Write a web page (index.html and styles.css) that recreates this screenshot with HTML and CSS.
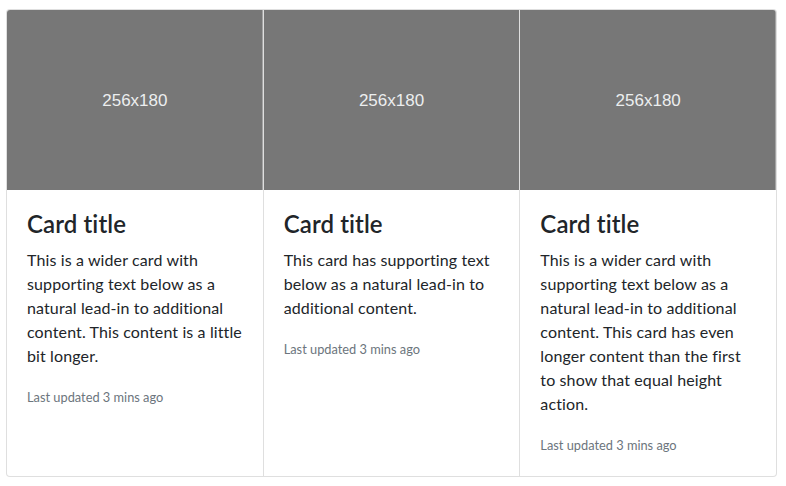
FILE: index.html
```html
<!DOCTYPE html>
<html lang="en">
<head>
<meta charset="utf-8">
<title>Card group</title>
<link rel="stylesheet" href="styles.css">
</head>
<body>
<div class="card-group">
  <div class="card">
    <svg class="card-img" viewBox="0 0 256 180" preserveAspectRatio="none" aria-label="256x180"><rect width="256" height="180" fill="#777"/></svg>
    <span class="img-label">256x180</span>
    <div class="card-body">
      <h5 class="card-title">Card title</h5>
      <p class="card-text">This is a wider card with supporting text below as a natural lead-in to additional content. This content is a little bit longer.</p>
      <p class="card-text"><small class="muted">Last updated 3 mins ago</small></p>
    </div>
  </div>
  <div class="card">
    <svg class="card-img" viewBox="0 0 256 180" preserveAspectRatio="none" aria-label="256x180"><rect width="256" height="180" fill="#777"/></svg>
    <span class="img-label">256x180</span>
    <div class="card-body">
      <h5 class="card-title">Card title</h5>
      <p class="card-text">This card has supporting text below as a natural lead-in to additional content.</p>
      <p class="card-text"><small class="muted">Last updated 3 mins ago</small></p>
    </div>
  </div>
  <div class="card">
    <svg class="card-img" viewBox="0 0 256 180" preserveAspectRatio="none" aria-label="256x180"><rect width="256" height="180" fill="#777"/></svg>
    <span class="img-label">256x180</span>
    <div class="card-body">
      <h5 class="card-title">Card title</h5>
      <p class="card-text">This is a wider card with supporting text below as a natural lead-in to additional content. This card has even longer content than the first to show that equal height action.</p>
      <p class="card-text"><small class="muted">Last updated 3 mins ago</small></p>
    </div>
  </div>
</div>
</body>
</html>
```
FILE: styles.css
```css
* { box-sizing: border-box; }
html, body { margin: 0; padding: 0; background: #fff; }
body {
  font-family: Lato, "Noto Sans", sans-serif;
  font-size: 16px;
  line-height: 1.5;
  color: #212529;
  padding: 9px 9px 0 6px;
}
.card-group {
  display: flex;
  width: 771px;
}
.card {
  position: relative;
  flex: 1 0 0%;
  display: flex;
  flex-direction: column;
  background: #fff;
  border: 1px solid rgba(0, 0, 0, 0.125);
}
.card + .card { border-left: 0; }
.card:first-child { border-radius: 4px 0 0 4px; }
.card:last-child { border-radius: 0 4px 4px 0; }
.card-img {
  display: block;
  width: 100%;
  height: 180px;
}
.card:first-child .card-img { border-top-left-radius: 3px; }
.card:last-child .card-img { border-top-right-radius: 3px; }
.img-label {
  position: absolute;
  left: 0;
  right: 0;
  top: 81px;
  text-align: center;
  font-family: "Liberation Sans", Arial, sans-serif;
  font-size: 17px;
  line-height: 20px;
  color: #eceeef;
}
.card-body {
  flex: 1 1 auto;
  padding: 20px;
}
.card-title {
  margin: 0 0 9px;
  font-size: 24px;
  font-weight: 600;
  line-height: 1.2;
  letter-spacing: 0.1px;
}
.card-text {
  margin: 0 0 16px;
  letter-spacing: 0.12px;
}
.card-text:last-child { margin-bottom: 0; }
.muted { font-size: 80%; color: #6c757d; letter-spacing: 0; }
```
